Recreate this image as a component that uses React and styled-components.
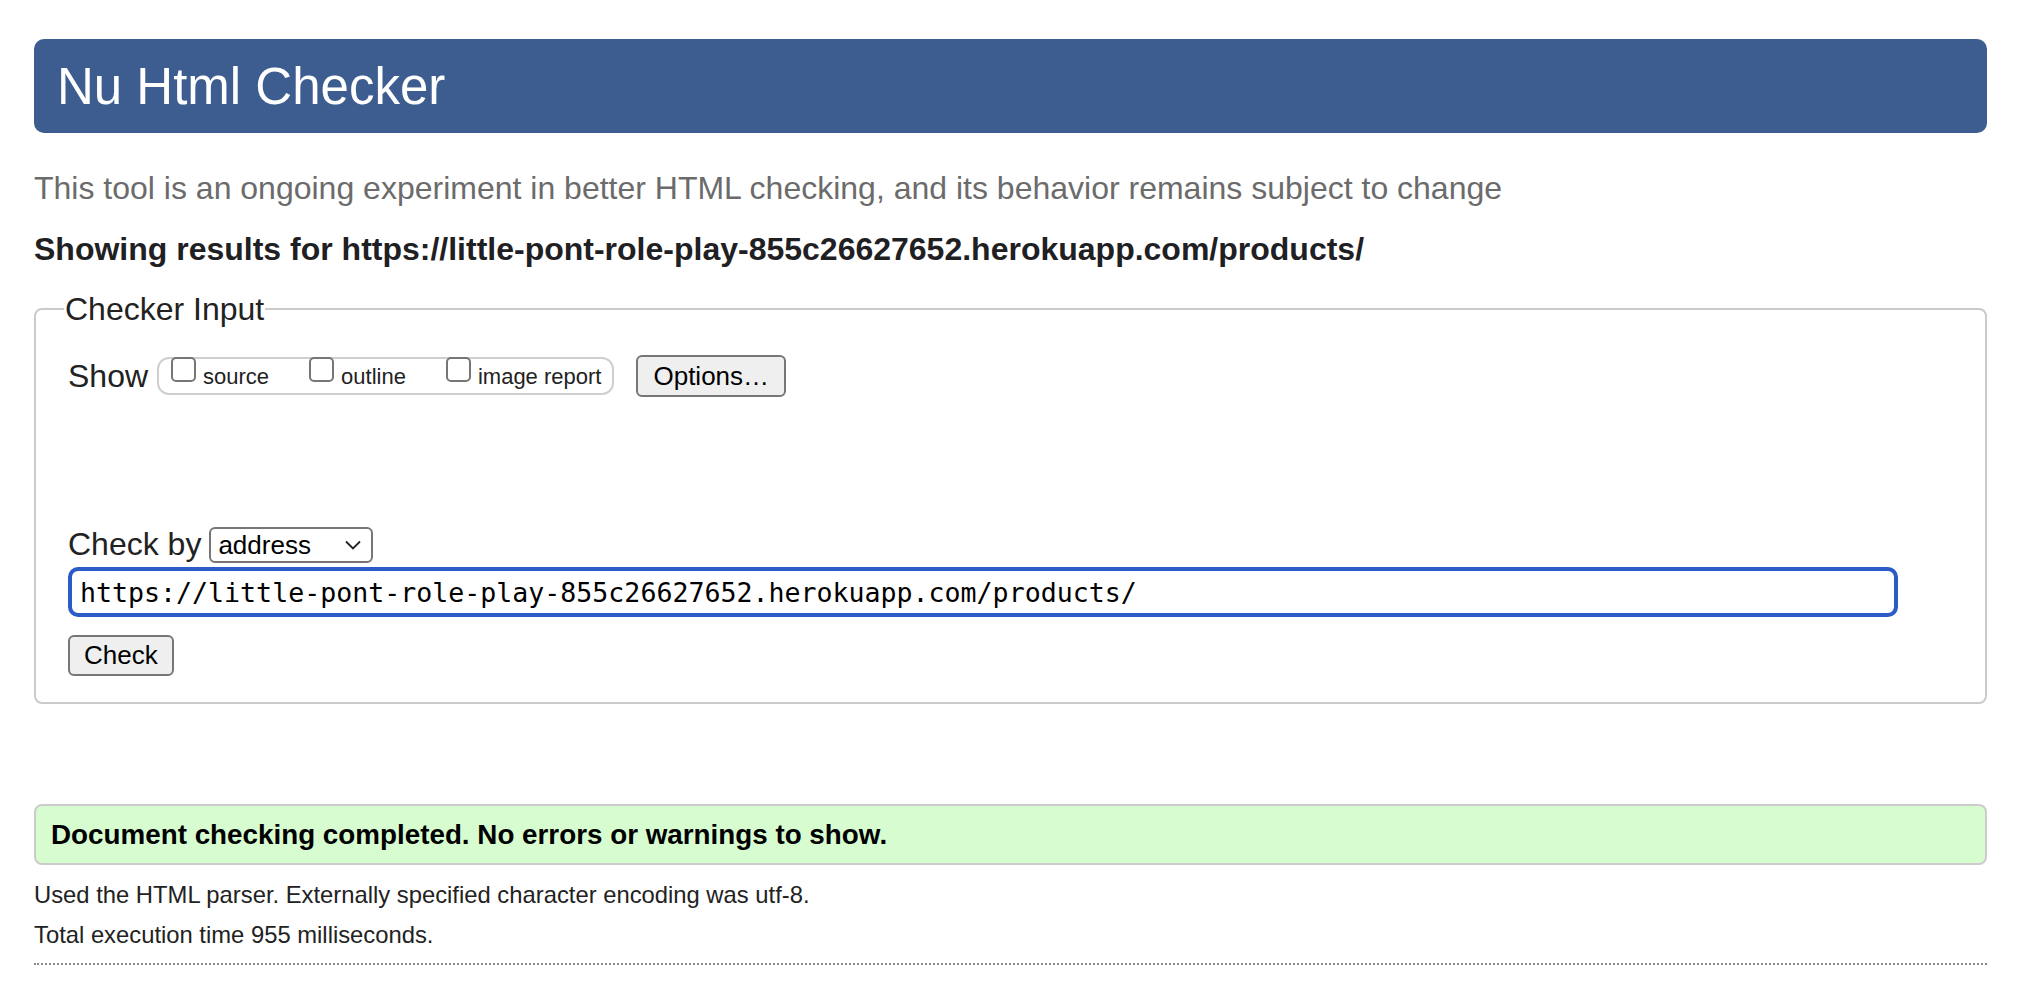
import styled, { createGlobalStyle } from 'styled-components';

const GlobalStyle = createGlobalStyle`
  body {
    margin: 0;
    background: #fff;
    font-family: "Liberation Sans", Arial, sans-serif;
    color: #222;
  }
`;

const Page = styled.div`
  padding: 39px 39px 40px 34px;
`;

const Header = styled.h1`
  margin: 0;
  height: 94px;
  display: flex;
  align-items: center;
  padding-left: 23px;
  background: #3d5c8f;
  border-radius: 10px;
  color: #fff;
  font-size: 51px;
  font-weight: 400;
`;

const Intro = styled.p`
  margin: 37px 0 0;
  font-size: 32px;
  line-height: 36px;
  color: #6b6b6b;
`;

const Showing = styled.h2`
  margin: 24px 0 0;
  font-size: 32px;
  line-height: 38px;
  font-weight: 700;
  color: #1f2024;
`;

const Fieldset = styled.fieldset`
  margin: 23px 0 0;
  padding: 0 32px 26px 32px;
  border: 2px solid #cbcbcb;
  border-radius: 8px;
`;

const Legend = styled.legend`
  padding: 0 1px;
  margin-left: -4px;
  font-size: 32px;
  line-height: 36px;
  color: #222;
`;

const Row = styled.div`
  display: flex;
  align-items: center;
  gap: ${(p) => p.gap || 8}px;
  margin-top: ${(p) => p.top || 0}px;
`;

const Label = styled.span`
  font-size: 32px;
  color: #222;
`;

const CheckGroup = styled.div`
  display: flex;
  align-items: flex-end;
  gap: 40px;
  height: 34px;
  padding: 0 11px 0 12px;
  border: 2px solid #cfcfcf;
  border-radius: 12px;
  margin-left: 1px;
`;

const CheckItem = styled.label`
  display: flex;
  align-items: flex-start;
  gap: 7px;
  font-size: 22px;
  color: #222;
  padding-bottom: 3px;
`;

const Box = styled.span`
  width: 21px;
  height: 21px;
  margin-top: -7px;
  border: 2px solid #767676;
  border-radius: 5px;
  background: #fff;
`;

const Button = styled.button`
  height: ${(p) => p.h || 42}px;
  padding: 0 ${(p) => p.px || 14}px;
  font-family: "Liberation Sans", Arial, sans-serif;
  font-size: 26px;
  color: #000;
  background: #efefef;
  border: 2px solid #767676;
  border-radius: 6px;
  margin-left: ${(p) => p.ml || 0}px;
`;

const SelectWrap = styled.div`
  position: relative;
  width: 164px;
  height: 36px;
`;

const Select = styled.select`
  appearance: none;
  width: 100%;
  height: 100%;
  padding: 0 0 0 7px;
  font-family: "Liberation Sans", Arial, sans-serif;
  font-size: 26px;
  color: #000;
  background: #fff;
  border: 2px solid #767676;
  border-radius: 6px;
`;

const Chevron = styled.svg`
  position: absolute;
  right: 12px;
  top: 13px;
  pointer-events: none;
`;

const UrlInput = styled.input`
  display: block;
  box-sizing: border-box;
  width: 1830px;
  height: 50px;
  margin-top: 4px;
  padding: 0 8px;
  font-family: "DejaVu Sans Mono", "Liberation Mono", monospace;
  font-size: 26.6px;
  color: #000;
  border: 4px solid #2a5bc6;
  border-radius: 10px;
  outline: none;
`;

const Result = styled.div`
  margin-top: 100px;
  height: 57px;
  display: flex;
  align-items: center;
  padding-left: 15px;
  background: #d7fcd0;
  border: 2px solid #cccccc;
  border-radius: 8px;
  font-size: 27.8px;
  font-weight: 700;
  color: #000;
`;

const Note = styled.p`
  margin: ${(p) => p.top || 0}px 0 0;
  font-size: 23.8px;
  line-height: 30px;
  color: #222;
`;

const Rule = styled.hr`
  margin: 13px 0 0;
  border: 0;
  border-top: 2px dotted #8a8a8a;
`;

const url = 'https://little-pont-role-play-855c26627652.herokuapp.com/products/';

export default function App() {
  return (
    <Page>
      <GlobalStyle />
      <Header>Nu Html Checker</Header>
      <Intro>
        This tool is an ongoing experiment in better HTML checking, and its behavior remains
        subject to change
      </Intro>
      <Showing>Showing results for {url}</Showing>
      <Fieldset>
        <Legend>Checker Input</Legend>
        <Row top={28} gap={8}>
          <Label>Show</Label>
          <CheckGroup>
            <CheckItem>
              <Box />
              source
            </CheckItem>
            <CheckItem>
              <Box />
              outline
            </CheckItem>
            <CheckItem>
              <Box />
              image report
            </CheckItem>
          </CheckGroup>
          <Button ml={14} px={15}>Options…</Button>
        </Row>
        <Row top={129} gap={8}>
          <Label>Check by</Label>
          <SelectWrap>
            <Select defaultValue="address">
              <option value="address">address</option>
              <option value="file">file upload</option>
              <option value="text">text input</option>
            </Select>
            <Chevron width="16" height="10" viewBox="0 0 16 10">
              <path d="M1 1.5 L8 8.5 L15 1.5" fill="none" stroke="#222" strokeWidth="1.8" />
            </Chevron>
          </SelectWrap>
        </Row>
        <UrlInput defaultValue={url} />
        <Row top={18}>
          <Button h={41} px={14}>Check</Button>
        </Row>
      </Fieldset>
      <Result>Document checking completed. No errors or warnings to show.</Result>
      <Note top={15}>Used the HTML parser. Externally specified character encoding was utf-8.</Note>
      <Note top={10}>Total execution time 955 milliseconds.</Note>
      <Rule />
    </Page>
  );
}
